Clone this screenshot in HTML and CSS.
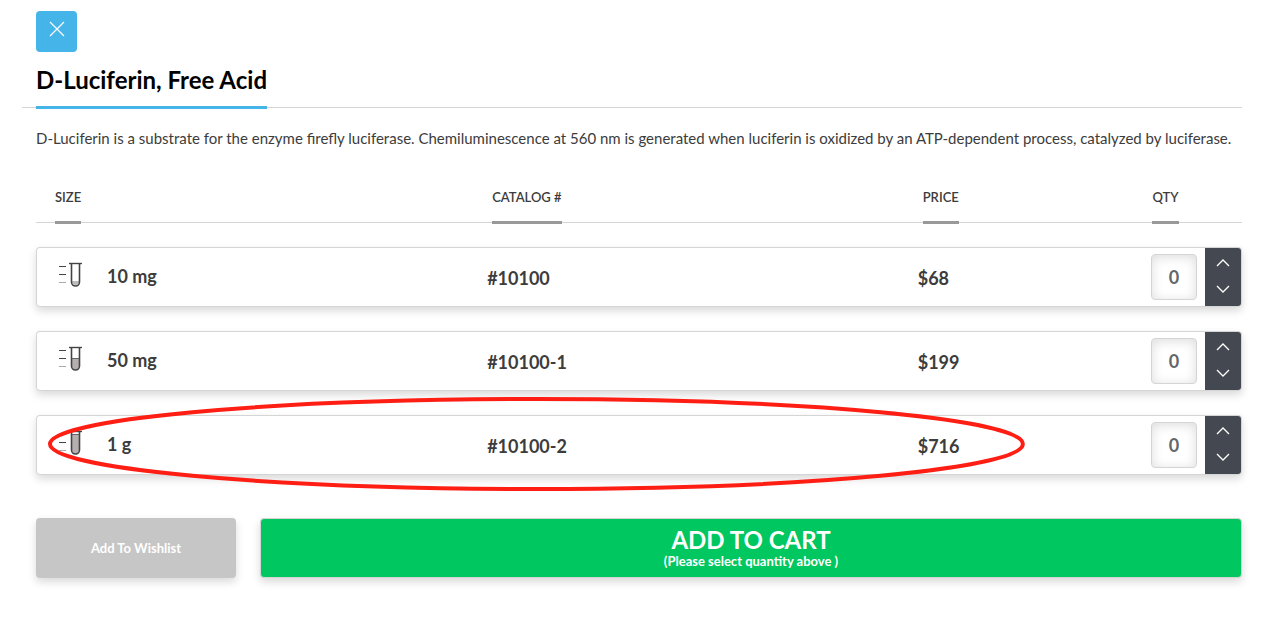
FILE: index.html
```
<!DOCTYPE html>
<html lang="en">
<head>
  <meta charset="UTF-8" />
  <title>D-Luciferin, Free Acid</title>
  <link rel="stylesheet" href="styles.css">
</head>
<body>
  <svg class="symbols" aria-hidden="true">
    <symbol id="tube" viewBox="0 0 26 26">
      <path d="M2 4.5h7M2 12.5h7" stroke="#444" fill="none" />
      <path d="M2 20.5h7" stroke="#aaa" fill="none" />
      <path d="M12 1.5h13" stroke="#444" stroke-width="1.4" fill="none" />
      <path d="M14.5 1.5v18.5a4 4 0 0 0 8 0v-18.5" stroke="#444" stroke-width="1.6" fill="none" />
    </symbol>
    <symbol id="up" viewBox="0 0 14 8">
      <path d="M1 7l6-6 6 6" stroke="#fff" stroke-width="1.3" fill="none" />
    </symbol>
    <symbol id="down" viewBox="0 0 14 8">
      <path d="M1 1l6 6 6-6" stroke="#fff" stroke-width="1.3" fill="none" />
    </symbol>
  </svg>

  <main class="product">
    <button type="button" class="close" aria-label="Close">
      <svg width="16" height="16" viewBox="0 0 16 16"><path d="M1 1l14 14M15 1L1 15" stroke="#fff" stroke-width="1.2" /></svg>
    </button>

    <header class="product-header">
      <h1>D-Luciferin, Free Acid</h1>
    </header>

    <p class="description">D-Luciferin is a substrate for the enzyme firefly luciferase. Chemiluminescence at 560 nm is generated when luciferin is oxidized by an ATP-dependent process, catalyzed by luciferase.</p>

    <form>
      <div class="table-wrap">
        <table>
          <thead>
            <tr>
              <th class="col-size"><span>SIZE</span></th>
              <th class="col-catalog"><span>CATALOG #</span></th>
              <th class="col-price"><span>PRICE</span></th>
              <th class="col-qty"><span>QTY</span></th>
            </tr>
          </thead>
          <tbody>
            <tr>
              <td>
                <div class="size">
                  <svg width="26" height="26" viewBox="0 0 26 26"><path d="M15 19h7a3.5 4 0 0 1-7 0z" fill="#bbb" /><use href="#tube" /></svg>
                  <label for="qty-1">10 mg</label>
                </div>
              </td>
              <td>#10100</td>
              <td>$68</td>
              <td>
                <div class="qty">
                  <input type="text" id="qty-1" value="0">
                  <div class="stepper">
                    <button type="button" aria-label="More"><svg width="14" height="8"><use href="#up" /></svg></button>
                    <button type="button" aria-label="Less"><svg width="14" height="8"><use href="#down" /></svg></button>
                  </div>
                </div>
              </td>
            </tr>
            <tr>
              <td>
                <div class="size">
                  <svg width="26" height="26" viewBox="0 0 26 26"><path d="M15 12h7v8a3.5 4 0 0 1-7 0z" fill="#b5afaf" /><path d="M15 12.5h7" stroke="#666" /><use href="#tube" /></svg>
                  <label for="qty-2">50 mg</label>
                </div>
              </td>
              <td>#10100-1</td>
              <td>$199</td>
              <td>
                <div class="qty">
                  <input type="text" id="qty-2" value="0">
                  <div class="stepper">
                    <button type="button" aria-label="More"><svg width="14" height="8"><use href="#up" /></svg></button>
                    <button type="button" aria-label="Less"><svg width="14" height="8"><use href="#down" /></svg></button>
                  </div>
                </div>
              </td>
            </tr>
            <tr>
              <td>
                <div class="size">
                  <svg width="26" height="26" viewBox="0 0 26 26"><path d="M15 4h7v16a3.5 4 0 0 1-7 0z" fill="#b5afaf" /><path d="M15 4.5h7" stroke="#666" /><use href="#tube" /></svg>
                  <label for="qty-3">1 g</label>
                </div>
              </td>
              <td>#10100-2</td>
              <td>$716</td>
              <td>
                <div class="qty">
                  <input type="text" id="qty-3" value="0">
                  <div class="stepper">
                    <button type="button" aria-label="More"><svg width="14" height="8"><use href="#up" /></svg></button>
                    <button type="button" aria-label="Less"><svg width="14" height="8"><use href="#down" /></svg></button>
                  </div>
                </div>
              </td>
            </tr>
          </tbody>
        </table>
        <!-- red circle around the last size -->
        <svg class="highlight" viewBox="0 0 978 94" preserveAspectRatio="none" aria-hidden="true">
          <ellipse cx="489" cy="47" rx="487" ry="45" />
        </svg>
      </div>

      <div class="actions">
        <button type="button" class="wishlist">Add To Wishlist</button>
        <button type="submit" class="cart">
          <span class="cart-title">ADD TO CART</span>
          <span class="cart-note">(Please select quantity above )</span>
        </button>
      </div>
    </form>
  </main>
</body>
</html>
```
FILE: styles.css
```
:root {
  --blue: #45b4e8;
  --green: #00c75f;
  --dark: #444851;
  --text: #3c3c3c;
  --border: #d5d5d5;
  --shadow: 0 4px 8px rgba(0, 0, 0, 0.15);
}

* {
  margin: 0;
  padding: 0;
  box-sizing: border-box;
}

body {
  font-family: Lato, sans-serif;
  background-color: #fff;
  color: var(--text);
}

button {
  border: none;
  font-family: inherit;
  cursor: pointer;
}

.symbols {
  display: none;
}

.product {
  padding: 11px 32px 40px 36px;
}

.close {
  display: block;
  width: 41px;
  height: 41px;
  padding-bottom: 6px;
  border-radius: 4px;
  background-color: var(--blue);
}

.close svg {
  display: block;
  margin: 0 auto;
}

.product-header {
  display: flex;
  margin-left: -14px;
  padding-left: 14px;
  padding-top: 12px;
  border-bottom: 1px solid var(--border);
}

h1 {
  margin-bottom: -2px;
  padding-bottom: 10px;
  border-bottom: 3px solid var(--blue);
  color: #000;
  font-size: 24px;
  font-weight: bold;
  line-height: 32px;
}

.description {
  margin-top: 20px;
  font-size: 15px;
  line-height: 20px;
}

.table-wrap {
  position: relative;
  margin-top: 15px;
}

table {
  width: 100%;
  table-layout: fixed;
  border-spacing: 0 24px;
}

th {
  padding-left: 19px;
  border-bottom: 1px solid var(--border);
  font-size: 13px;
  font-weight: 600;
  line-height: 20px;
  text-align: left;
}

th span {
  display: block;
  width: fit-content;
  margin-bottom: -2px;
  padding-bottom: 14px;
  border-bottom: 3px solid #999;
}

.col-size {
  width: 36%;
}

.col-catalog {
  width: 35.7%;
}

.col-catalog,
.col-price {
  padding-left: 22px;
}

.col-price {
  width: 19.3%;
}

.col-qty {
  width: 9%;
}

tbody tr {
  height: 60px;
  border-radius: 4px;
  box-shadow: var(--shadow);
}

td {
  padding-top: 2px;
  padding-left: 17px;
  border: 1px solid var(--border);
  border-width: 1px 0;
  background-color: #fff;
  font-size: 18px;
  font-weight: bold;
}

td:first-child {
  padding-top: 0;
  padding-left: 20px;
  border-left-width: 1px;
  border-radius: 4px 0 0 4px;
}

td:last-child {
  padding: 0;
  border-right-width: 1px;
  border-radius: 0 4px 4px 0;
}

.size {
  display: flex;
  align-items: center;
  gap: 24px;
  padding-bottom: 4px;
}

.size label {
  padding-top: 2px;
}

.qty {
  display: flex;
  align-items: center;
  justify-content: flex-end;
  gap: 8px;
}

.qty input {
  width: 46px;
  height: 46px;
  border: 1px solid var(--border);
  border-radius: 4px;
  background-color: #fff;
  box-shadow: inset 0 2px 12px rgba(0, 0, 0, 0.14);
  color: #666;
  font-family: Lato, sans-serif;
  font-size: 18px;
  font-weight: bold;
  text-align: center;
}

.stepper {
  display: flex;
  flex-direction: column;
  width: 36px;
  height: 58px;
  padding: 2px 0 4px;
  border-radius: 0 3px 3px 0;
  background-color: var(--dark);
}

.stepper button {
  display: flex;
  flex: 1;
  align-items: center;
  justify-content: center;
  background: none;
}

.highlight {
  position: absolute;
  bottom: 8px;
  left: 1%;
  width: 81%;
  height: 94px;
}

.highlight ellipse {
  fill: none;
  stroke: #ff1e14;
  stroke-width: 4px;
}

.actions {
  display: flex;
  gap: 24px;
  margin-top: 19px;
}

.actions button {
  height: 60px;
  border-radius: 4px;
  box-shadow: var(--shadow);
  color: #fff;
  font-weight: bold;
}

.actions .wishlist {
  width: 200px;
  background-color: #c6c6c6;
  font-size: 13px;
}

.actions .cart {
  flex: 1;
  border: 1px solid var(--border);
  background-color: var(--green);
}

.cart-title,
.cart-note {
  display: block;
}

.cart-title {
  font-size: 24px;
  line-height: 26px;
}

.cart-note {
  font-size: 13px;
  line-height: 16px;
}
```
